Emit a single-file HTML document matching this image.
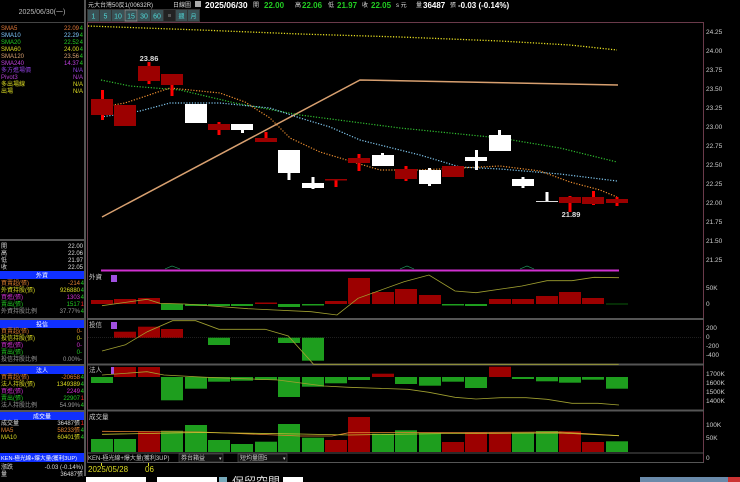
<!DOCTYPE html>
<html><head><meta charset="utf-8"><style>
html,body{margin:0;padding:0;background:#000;width:740px;height:482px;overflow:hidden}
svg{display:block}
text{font-family:"Liberation Sans","Noto Sans CJK TC",sans-serif}
</style></head><body>
<svg width="740" height="482" viewBox="0 0 740 482" xmlns="http://www.w3.org/2000/svg">
<rect width="740" height="482" fill="#000"/>
<rect x="84" y="0" width="2" height="476" fill="#555"/>
<text x="42" y="14" font-size="7" fill="#bbb" text-anchor="middle">2025/06/30(一)</text>
<rect x="0" y="22" width="84" height="1" fill="#444"/>
<g font-size="6">
<text x="1" y="30" fill="#e07838">SMA5</text><text x="79" y="30" fill="#e07838" text-anchor="end">22.09</text><text x="83" y="30" fill="#2c2" text-anchor="end">4</text>
<text x="1" y="37" fill="#7fc8ff">SMA10</text><text x="79" y="37" fill="#7fc8ff" text-anchor="end">22.29</text><text x="83" y="37" fill="#2c2" text-anchor="end">4</text>
<text x="1" y="44" fill="#2c2">SMA20</text><text x="79" y="44" fill="#2c2" text-anchor="end">22.52</text><text x="83" y="44" fill="#2c2" text-anchor="end">4</text>
<text x="1" y="51" fill="#dd2">SMA60</text><text x="79" y="51" fill="#dd2" text-anchor="end">24.00</text><text x="83" y="51" fill="#2c2" text-anchor="end">4</text>
<text x="1" y="58" fill="#d8a070">SMA120</text><text x="79" y="58" fill="#d8a070" text-anchor="end">23.56</text><text x="83" y="58" fill="#2c2" text-anchor="end">4</text>
<text x="1" y="65" fill="#c040e0">SMA240</text><text x="79" y="65" fill="#c040e0" text-anchor="end">14.37</text><text x="83" y="65" fill="#2c2" text-anchor="end">4</text>
<text x="1" y="72" fill="#9040e0">多方進場價</text><text x="83" y="72" fill="#9040e0" text-anchor="end">N/A</text>
<text x="1" y="79" fill="#b040d0">Pivot3</text><text x="83" y="79" fill="#b040d0" text-anchor="end">N/A</text>
<text x="1" y="86" fill="#dd2">多出場線</text><text x="83" y="86" fill="#dd2" text-anchor="end">N/A</text>
<text x="1" y="93" fill="#dd2">出場</text><text x="83" y="93" fill="#dd2" text-anchor="end">N/A</text>
</g>
<rect x="0" y="239" width="84" height="2" fill="#555"/>
<g font-size="6" fill="#ddd">
<text x="1" y="248">開</text><text x="83" y="248" text-anchor="end">22.00</text>
<text x="1" y="255">高</text><text x="83" y="255" text-anchor="end">22.06</text>
<text x="1" y="262">低</text><text x="83" y="262" text-anchor="end">21.97</text>
<text x="1" y="269">收</text><text x="83" y="269" text-anchor="end">22.05</text>
</g>
<g font-size="6">
<rect x="0" y="271" width="84" height="8" fill="#1030ff"/><text x="42" y="277.5" fill="#fff" text-anchor="middle">外資</text>
<text x="1" y="285" fill="#e08030">買賣超(張)</text><text x="80" y="285" fill="#e08030" text-anchor="end">-214</text><text x="84" y="285" fill="#2c2" text-anchor="end">4</text>
<text x="1" y="292" fill="#dd2">外資持股(張)</text><text x="80" y="292" fill="#dd2" text-anchor="end">926880</text><text x="84" y="292" fill="#2c2" text-anchor="end">4</text>
<text x="1" y="299" fill="#d030d0">買進(張)</text><text x="80" y="299" fill="#d030d0" text-anchor="end">1303</text><text x="84" y="299" fill="#2c2" text-anchor="end">4</text>
<text x="1" y="306" fill="#2c2">賣出(張)</text><text x="80" y="306" fill="#2c2" text-anchor="end">1517</text><text x="84" y="306" fill="#f22" text-anchor="end">1</text>
<text x="1" y="313" fill="#999">外資持股比例</text><text x="80" y="313" fill="#999" text-anchor="end">37.77%</text><text x="84" y="313" fill="#2c2" text-anchor="end">4</text>
<rect x="0" y="318" width="84" height="2" fill="#555"/>
<rect x="0" y="320" width="84" height="8" fill="#1030ff"/><text x="42" y="326.5" fill="#fff" text-anchor="middle">投信</text>
<text x="1" y="333" fill="#e08030">買賣超(張)</text><text x="82" y="333" fill="#e08030" text-anchor="end">0-</text>
<text x="1" y="340" fill="#dd2">投信持股(張)</text><text x="82" y="340" fill="#dd2" text-anchor="end">0-</text>
<text x="1" y="347" fill="#d030d0">買進(張)</text><text x="82" y="347" fill="#d030d0" text-anchor="end">0-</text>
<text x="1" y="354" fill="#2c2">賣出(張)</text><text x="82" y="354" fill="#2c2" text-anchor="end">0-</text>
<text x="1" y="361" fill="#999">投信持股比例</text><text x="82" y="361" fill="#999" text-anchor="end">0.00%-</text>
<rect x="0" y="364" width="84" height="2" fill="#555"/>
<rect x="0" y="366" width="84" height="8" fill="#1030ff"/><text x="42" y="372.5" fill="#fff" text-anchor="middle">法人</text>
<text x="1" y="379" fill="#e08030">買賣超(張)</text><text x="80" y="379" fill="#e08030" text-anchor="end">-20658</text><text x="84" y="379" fill="#2c2" text-anchor="end">4</text>
<text x="1" y="386" fill="#dd2">法人持股(張)</text><text x="80" y="386" fill="#dd2" text-anchor="end">1349389</text><text x="84" y="386" fill="#2c2" text-anchor="end">4</text>
<text x="1" y="393" fill="#d030d0">買進(張)</text><text x="80" y="393" fill="#d030d0" text-anchor="end">2249</text><text x="84" y="393" fill="#2c2" text-anchor="end">4</text>
<text x="1" y="400" fill="#2c2">賣出(張)</text><text x="80" y="400" fill="#2c2" text-anchor="end">22907</text><text x="84" y="400" fill="#f22" text-anchor="end">1</text>
<text x="1" y="407" fill="#999">法人持股比例</text><text x="80" y="407" fill="#999" text-anchor="end">54.99%</text><text x="84" y="407" fill="#2c2" text-anchor="end">4</text>
<rect x="0" y="410" width="84" height="2" fill="#555"/>
<rect x="0" y="412" width="84" height="8" fill="#1030ff"/><text x="42" y="418.5" fill="#fff" text-anchor="middle">成交量</text>
<text x="1" y="425" fill="#ddd">成交量</text><text x="80" y="425" fill="#ddd" text-anchor="end">36487張</text><text x="84" y="425" fill="#f22" text-anchor="end">1</text>
<text x="1" y="432" fill="#e08030">MA5</text><text x="80" y="432" fill="#e08030" text-anchor="end">58233張</text><text x="84" y="432" fill="#2c2" text-anchor="end">4</text>
<text x="1" y="439" fill="#dd2">MA10</text><text x="80" y="439" fill="#dd2" text-anchor="end">60401張</text><text x="84" y="439" fill="#2c2" text-anchor="end">4</text>
<rect x="0" y="453" width="84" height="9" fill="#1030ff"/><text x="1" y="460" fill="#fff" font-size="5.6">KEN-極光線+爆大量(獲利3UP)</text>
<text x="1" y="469" fill="#ddd">漲跌</text><text x="83" y="469" fill="#ddd" text-anchor="end">-0.03 (-0.14%)</text>
<text x="1" y="476" fill="#ddd">量</text><text x="83" y="476" fill="#ddd" text-anchor="end">36487張</text>
</g>
<!-- top bar -->
<text x="88" y="7" font-size="6" fill="#ddd">元大台灣50反1(00632R)</text>
<text x="173" y="7" font-size="6" fill="#ddd">日線圖</text>
<rect x="195" y="1" width="6" height="6" fill="#aaa"/>
<text x="205" y="8" font-size="8.5" font-weight="bold" fill="#fff">2025/06/30</text>
<g font-size="6" fill="#ddd"><text x="253" y="7">開</text><text x="295" y="7">高</text><text x="328" y="7">低</text><text x="362" y="7">收</text><text x="396" y="7">s 元</text><text x="416" y="7">量</text><text x="450" y="7">張</text></g>
<g font-size="8" font-weight="bold" fill="#2c2"><text x="264" y="8">22.00</text><text x="302" y="8">22.06</text><text x="337" y="8">21.97</text><text x="371" y="8">22.05</text></g>
<text x="423" y="8" font-size="8" font-weight="bold" fill="#fff">36487</text>
<text x="458" y="8" font-size="8" font-weight="bold" fill="#fff">-0.03 (-0.14%)</text>
<!-- buttons -->
<rect x="87" y="9" width="113" height="13" fill="#333"/>
<g font-size="7" fill="#50d8d8" text-anchor="middle">
<rect x="88" y="10" width="11" height="11" fill="#3a5054"/><text x="93.5" y="18.5">1</text>
<rect x="100" y="10" width="11" height="11" fill="#3a5054"/><text x="105.5" y="18.5">5</text>
<rect x="112" y="10" width="12" height="11" fill="#3a5054"/><text x="118" y="18.5">10</text>
<rect x="125" y="10" width="12" height="11" fill="#3a5054" stroke="#999" stroke-width="0.7"/><text x="131" y="18.5">15</text>
<rect x="138" y="10" width="12" height="11" fill="#3a5054"/><text x="144" y="18.5">30</text>
<rect x="151" y="10" width="12" height="11" fill="#3a5054"/><text x="157" y="18.5">60</text>
<rect x="164" y="10" width="11" height="11" fill="#222"/><rect x="168" y="14" width="3" height="3" fill="#555"/>
<rect x="176" y="10" width="11" height="11" fill="#3a5054"/><text x="181.5" y="18.5" font-size="6">週</text>
<rect x="188" y="10" width="11" height="11" fill="#3a5054"/><text x="193.5" y="18.5" font-size="6">月</text>
</g>
<rect x="87" y="22" width="617" height="1" fill="#6a3a4a"/>
<rect x="87" y="22" width="1" height="440" fill="#6a3a4a"/>
<rect x="703" y="22" width="1" height="440" fill="#6a3a4a"/>
<g font-size="6.5" fill="#ccc">
<text x="706" y="34">24.25</text><text x="706" y="53">24.00</text><text x="706" y="72">23.75</text><text x="706" y="91">23.50</text>
<text x="706" y="110">23.25</text><text x="706" y="129">23.00</text><text x="706" y="148">22.75</text><text x="706" y="167">22.50</text>
<text x="706" y="186">22.25</text><text x="706" y="205">22.00</text><text x="706" y="224">21.75</text><text x="706" y="243">21.50</text><text x="706" y="262">21.25</text>
<text x="706" y="290">50K</text><text x="706" y="306">0</text>
<text x="706" y="330">200</text><text x="706" y="339">0</text><text x="706" y="348">-200</text><text x="706" y="357">-400</text>
<text x="706" y="376">1700K</text><text x="706" y="385">1600K</text><text x="706" y="394">1500K</text><text x="706" y="403">1400K</text>
<text x="706" y="427">100K</text><text x="706" y="440">50K</text><text x="706" y="460">0</text>
</g>
<polyline points="88,26 200,30 300,34 400,37 500,41 570,45 617,50" fill="none" stroke="#e8e020" stroke-width="1.3" stroke-dasharray="1.2,1.6"/>
<polyline points="102,217 360,80 618,85" fill="none" stroke="#d8a070" stroke-width="1.5"/>
<polyline points="101,80 130,86 180,90 235,103 300,115 400,128 500,138 560,148 617,162" fill="none" stroke="#30c030" stroke-width="1.2" stroke-dasharray="1.2,1.6"/>
<polyline points="101,117 140,111 170,103 220,103 270,108 300,118 330,127 360,140 420,155 460,167 500,169 560,174 617,181" fill="none" stroke="#80c8f0" stroke-width="1.2" stroke-dasharray="1.2,1.6"/>
<polyline points="101,107 125,103 170,88 220,93 245,102 270,118 290,138 320,152 350,161 380,170 420,170 460,168 500,166 540,171 570,182 600,190 617,197" fill="none" stroke="#f09030" stroke-width="1.2" stroke-dasharray="1.2,1.6"/>
<g>
<rect x="101" y="90" width="3" height="30" fill="#f00"/><rect x="91" y="99" width="22" height="16" fill="#9c0000"/>
<rect x="114" y="105" width="22" height="21" fill="#9c0000"/>
<rect x="147.5" y="62" width="3" height="22" fill="#f00"/><rect x="138" y="66" width="22" height="15" fill="#9c0000"/>
<rect x="170.5" y="80" width="3" height="16" fill="#f00"/><rect x="161" y="74" width="22" height="11" fill="#9c0000"/>
<rect x="185" y="104" width="22" height="19" fill="#fff"/>
<rect x="217.5" y="122" width="3" height="13" fill="#f00"/><rect x="208" y="124" width="22" height="6" fill="#9c0000"/>
<rect x="241" y="125" width="3" height="8" fill="#fff"/><rect x="231" y="124" width="22" height="6" fill="#fff"/>
<rect x="264.5" y="132" width="3" height="10" fill="#f00"/><rect x="255" y="138" width="22" height="4" fill="#9c0000"/>
<rect x="287.5" y="170" width="3" height="10" fill="#fff"/><rect x="278" y="150" width="22" height="23" fill="#fff"/>
<rect x="311.5" y="177" width="3" height="12" fill="#fff"/><rect x="302" y="183" width="22" height="5" fill="#fff"/>
<rect x="334.5" y="179" width="3" height="8" fill="#f00"/><rect x="325" y="179" width="22" height="1.5" fill="#9c0000"/>
<rect x="357.5" y="154" width="3" height="17" fill="#f00"/><rect x="348" y="158" width="22" height="5" fill="#9c0000"/>
<rect x="381" y="153" width="3" height="5" fill="#fff"/><rect x="372" y="155" width="22" height="11" fill="#fff"/>
<rect x="404.5" y="166" width="3" height="15" fill="#f00"/><rect x="395" y="169" width="22" height="10" fill="#9c0000"/>
<rect x="428" y="168" width="3" height="18" fill="#fff"/><rect x="419" y="170" width="22" height="14" fill="#fff"/>
<rect x="442" y="166" width="22" height="11" fill="#9c0000"/>
<rect x="475" y="150" width="3" height="20" fill="#fff"/><rect x="465" y="157" width="22" height="4" fill="#fff"/>
<rect x="498" y="130" width="3" height="8" fill="#fff"/><rect x="489" y="135" width="22" height="16" fill="#fff"/>
<rect x="521.5" y="177" width="3" height="11" fill="#fff"/><rect x="512" y="179" width="22" height="7" fill="#fff"/>
<rect x="536" y="201" width="22" height="1" fill="#ddd"/><rect x="545.5" y="192" width="3" height="9" fill="#fff"/>
<rect x="568.5" y="196" width="3" height="16" fill="#f00"/><rect x="559" y="197" width="22" height="6" fill="#9c0000"/>
<rect x="592" y="191" width="3" height="14" fill="#f00"/><rect x="582" y="197" width="22" height="7" fill="#9c0000"/>
<rect x="615.5" y="197" width="3" height="9" fill="#f00"/><rect x="606" y="199" width="22" height="4" fill="#9c0000"/>
</g>
<text x="149" y="61" font-size="7.5" font-weight="bold" fill="#ddd" text-anchor="middle">23.86</text>
<text x="571" y="217" font-size="7.5" font-weight="bold" fill="#ddd" text-anchor="middle">21.89</text>
<rect x="101" y="269.5" width="518" height="2" fill="#d030d0"/>
<polyline points="165,269 172,266 180,269" fill="none" stroke="#2a6" stroke-width="0.6"/>
<polyline points="400,269 407,266 414,269" fill="none" stroke="#2a6" stroke-width="0.6"/>
<polyline points="520,269 527,266 534,269" fill="none" stroke="#2a6" stroke-width="0.6"/>
<rect x="87" y="318" width="617" height="2" fill="#555"/>
<rect x="87" y="363.5" width="617" height="2" fill="#555"/>
<rect x="87" y="409.5" width="617" height="2" fill="#555"/>
<rect x="87" y="452.5" width="617" height="1" fill="#555"/>
<rect x="87" y="462" width="617" height="1" fill="#555"/>
<g font-size="6.5" fill="#ccc">
<text x="89" y="279">外資</text><rect x="111" y="275" width="6" height="7" fill="#a050e0"/>
<text x="89" y="327">投信</text><rect x="111" y="322" width="6" height="7" fill="#a050e0"/>
<text x="89" y="372">法人</text><rect x="111" y="367" width="6" height="7" fill="#a050e0"/>
<text x="89" y="419">成交量</text>
</g>
<g>
<rect x="91" y="300" width="22" height="4" fill="#9c0000"/>
<rect x="114" y="299" width="22" height="5" fill="#9c0000"/>
<rect x="138" y="298" width="22" height="6" fill="#9c0000"/>
<rect x="161" y="304" width="22" height="6" fill="#1e9e1e"/>
<rect x="185" y="304" width="22" height="2" fill="#1e9e1e"/>
<rect x="208" y="304" width="22" height="2" fill="#1e9e1e"/>
<rect x="231" y="304" width="22" height="2" fill="#1e9e1e"/>
<rect x="255" y="302.5" width="22" height="1.5" fill="#9c0000"/>
<rect x="278" y="304" width="22" height="3" fill="#1e9e1e"/>
<rect x="302" y="304" width="22" height="1.5" fill="#1e9e1e"/>
<rect x="325" y="301" width="22" height="3" fill="#9c0000"/>
<rect x="348" y="278" width="22" height="26" fill="#9c0000"/>
<rect x="372" y="292" width="22" height="12" fill="#9c0000"/>
<rect x="395" y="289" width="22" height="15" fill="#9c0000"/>
<rect x="419" y="295" width="22" height="9" fill="#9c0000"/>
<rect x="442" y="304" width="22" height="1.5" fill="#1e9e1e"/>
<rect x="465" y="304" width="22" height="2" fill="#1e9e1e"/>
<rect x="489" y="299" width="22" height="5" fill="#9c0000"/>
<rect x="512" y="299" width="22" height="5" fill="#9c0000"/>
<rect x="536" y="296" width="22" height="8" fill="#9c0000"/>
<rect x="559" y="292" width="22" height="12" fill="#9c0000"/>
<rect x="582" y="298" width="22" height="6" fill="#9c0000"/>
<rect x="606" y="303.5" width="22" height="1" fill="#0a5a0a"/>
</g>
<polyline points="102,305.7 147,299.3 160,303.3 185,304 248,308.7 311,311.7 337,315 358,298.3 404,281.7 429,275 455,291 476,292.7 522,286 547,280.7 572,280.7 594,277.3 619,277.7" fill="none" stroke="#a0a030" stroke-width="0.8"/>
<line x1="88" y1="337.7" x2="702" y2="337.7" stroke="#333" stroke-width="0.6" stroke-dasharray="1,1"/>
<rect x="114" y="331.7" width="22" height="6" fill="#9c0000"/>
<rect x="138" y="326.7" width="22" height="11" fill="#9c0000"/>
<rect x="161" y="329" width="22" height="8.7" fill="#9c0000"/>
<rect x="208" y="337.7" width="22" height="7.3" fill="#1e9e1e"/>
<rect x="278" y="337.7" width="22" height="5.3" fill="#1e9e1e"/>
<rect x="302" y="337.7" width="22" height="23" fill="#1e9e1e"/>
<polyline points="102,351 125.5,344.7 147.3,331.7 172.6,320.7 195.7,320.7 218.9,329.3 265.2,329.3 288.3,336 313.6,364.3 618.7,364.3" fill="none" stroke="#a0a030" stroke-width="0.8"/>
<g>
<rect x="91" y="377" width="22" height="6" fill="#1e9e1e"/>
<rect x="114" y="367" width="22" height="10" fill="#9c0000"/>
<rect x="138" y="367" width="22" height="10" fill="#9c0000"/>
<rect x="161" y="377" width="22" height="23.3" fill="#1e9e1e"/>
<rect x="185" y="377" width="22" height="11.7" fill="#1e9e1e"/>
<rect x="208" y="377" width="22" height="4.7" fill="#1e9e1e"/>
<rect x="231" y="377" width="22" height="3.7" fill="#1e9e1e"/>
<rect x="255" y="377" width="22" height="3" fill="#1e9e1e"/>
<rect x="278" y="377" width="22" height="20" fill="#1e9e1e"/>
<rect x="302" y="377" width="22" height="9.7" fill="#1e9e1e"/>
<rect x="325" y="377" width="22" height="6.3" fill="#1e9e1e"/>
<rect x="348" y="377" width="22" height="3" fill="#1e9e1e"/>
<rect x="372" y="373.7" width="22" height="3.3" fill="#9c0000"/>
<rect x="395" y="377" width="22" height="7" fill="#1e9e1e"/>
<rect x="419" y="377" width="22" height="8.7" fill="#1e9e1e"/>
<rect x="442" y="377" width="22" height="4.7" fill="#1e9e1e"/>
<rect x="465" y="377" width="22" height="11" fill="#1e9e1e"/>
<rect x="489" y="366.7" width="22" height="10.3" fill="#9c0000"/>
<rect x="512" y="377" width="22" height="2" fill="#1e9e1e"/>
<rect x="536" y="377" width="22" height="4.3" fill="#1e9e1e"/>
<rect x="559" y="377" width="22" height="5.7" fill="#1e9e1e"/>
<rect x="582" y="377" width="22" height="2.7" fill="#1e9e1e"/>
<rect x="606" y="377" width="22" height="11.7" fill="#1e9e1e"/>
</g>
<polyline points="102,375 147,371.7 164,375 206,377.3 278,380 324,386 349,387.3 408,389.3 429,392.3 455,397.3 476,399 501,397.7 526,397.7 547,399.3 572,403.3 598,403.3 619,405" fill="none" stroke="#a0a030" stroke-width="0.8"/>
<g>
<rect x="91" y="439" width="22" height="13" fill="#1e9e1e"/>
<rect x="114" y="439" width="22" height="13" fill="#1e9e1e"/>
<rect x="138" y="431.7" width="22" height="20.3" fill="#9c0000"/>
<rect x="161" y="430.7" width="22" height="21.3" fill="#1e9e1e"/>
<rect x="185" y="425" width="22" height="27" fill="#1e9e1e"/>
<rect x="208" y="440" width="22" height="12" fill="#1e9e1e"/>
<rect x="231" y="444" width="22" height="8" fill="#1e9e1e"/>
<rect x="255" y="441.7" width="22" height="10.3" fill="#1e9e1e"/>
<rect x="278" y="424" width="22" height="28" fill="#1e9e1e"/>
<rect x="302" y="437.7" width="22" height="14.3" fill="#1e9e1e"/>
<rect x="325" y="440" width="22" height="12" fill="#9c0000"/>
<rect x="348" y="417" width="22" height="35" fill="#9c0000"/>
<rect x="372" y="433.7" width="22" height="18.3" fill="#1e9e1e"/>
<rect x="395" y="430.3" width="22" height="21.7" fill="#1e9e1e"/>
<rect x="419" y="433" width="22" height="19" fill="#1e9e1e"/>
<rect x="442" y="442" width="22" height="10" fill="#9c0000"/>
<rect x="465" y="432.7" width="22" height="19.3" fill="#9c0000"/>
<rect x="489" y="432.7" width="22" height="19.3" fill="#9c0000"/>
<rect x="512" y="432.7" width="22" height="19.3" fill="#1e9e1e"/>
<rect x="536" y="431" width="22" height="21" fill="#1e9e1e"/>
<rect x="559" y="431.3" width="22" height="20.7" fill="#9c0000"/>
<rect x="582" y="442" width="22" height="10" fill="#9c0000"/>
<rect x="606" y="441.3" width="22" height="10.7" fill="#1e9e1e"/>
</g>
<polyline points="102,431.3 200,432 300,436 332,436 349,432.7 450,432.5 560,432 619,435.7" fill="none" stroke="#e08030" stroke-width="0.8"/>
<polyline points="102,434.3 200,432.5 300,434 349,435 450,433.5 560,433 619,435.7" fill="none" stroke="#c0c030" stroke-width="0.8"/>
<text x="88" y="460" font-size="6" fill="#ccc">KEN-極光線+爆大量(獲利3UP)</text>
<rect x="179" y="454" width="44" height="8" fill="#111" stroke="#555" stroke-width="0.6"/><text x="181" y="460" font-size="6" fill="#ccc">券台箱益</text><text x="219" y="460" font-size="5" fill="#ccc">▾</text>
<rect x="238" y="454" width="49" height="8" fill="#111" stroke="#555" stroke-width="0.6"/><text x="240" y="460" font-size="6" fill="#ccc">短均量圖5</text><text x="283" y="460" font-size="5" fill="#ccc">▾</text>
<rect x="101" y="463" width="1" height="3" fill="#dd2"/><rect x="148" y="463" width="1" height="3" fill="#dd2"/>
<text x="88" y="472" font-size="8" fill="#dd2">2025/05/28</text>
<text x="145" y="472" font-size="8" fill="#dd2">06</text>
<rect x="86" y="477" width="60" height="5" fill="#fff"/>
<rect x="157" y="477" width="60" height="5" fill="#fff"/>
<rect x="219" y="477" width="8" height="5" fill="#7ab"/>
<text x="232" y="486" font-size="12" fill="#ddd">保留空間</text>
<rect x="283" y="477" width="20" height="5" fill="#fff"/>
<rect x="640" y="477" width="100" height="5" fill="#6a8aaa"/>
<rect x="728" y="477" width="12" height="5" fill="#c33"/>
</svg>
</body></html>
